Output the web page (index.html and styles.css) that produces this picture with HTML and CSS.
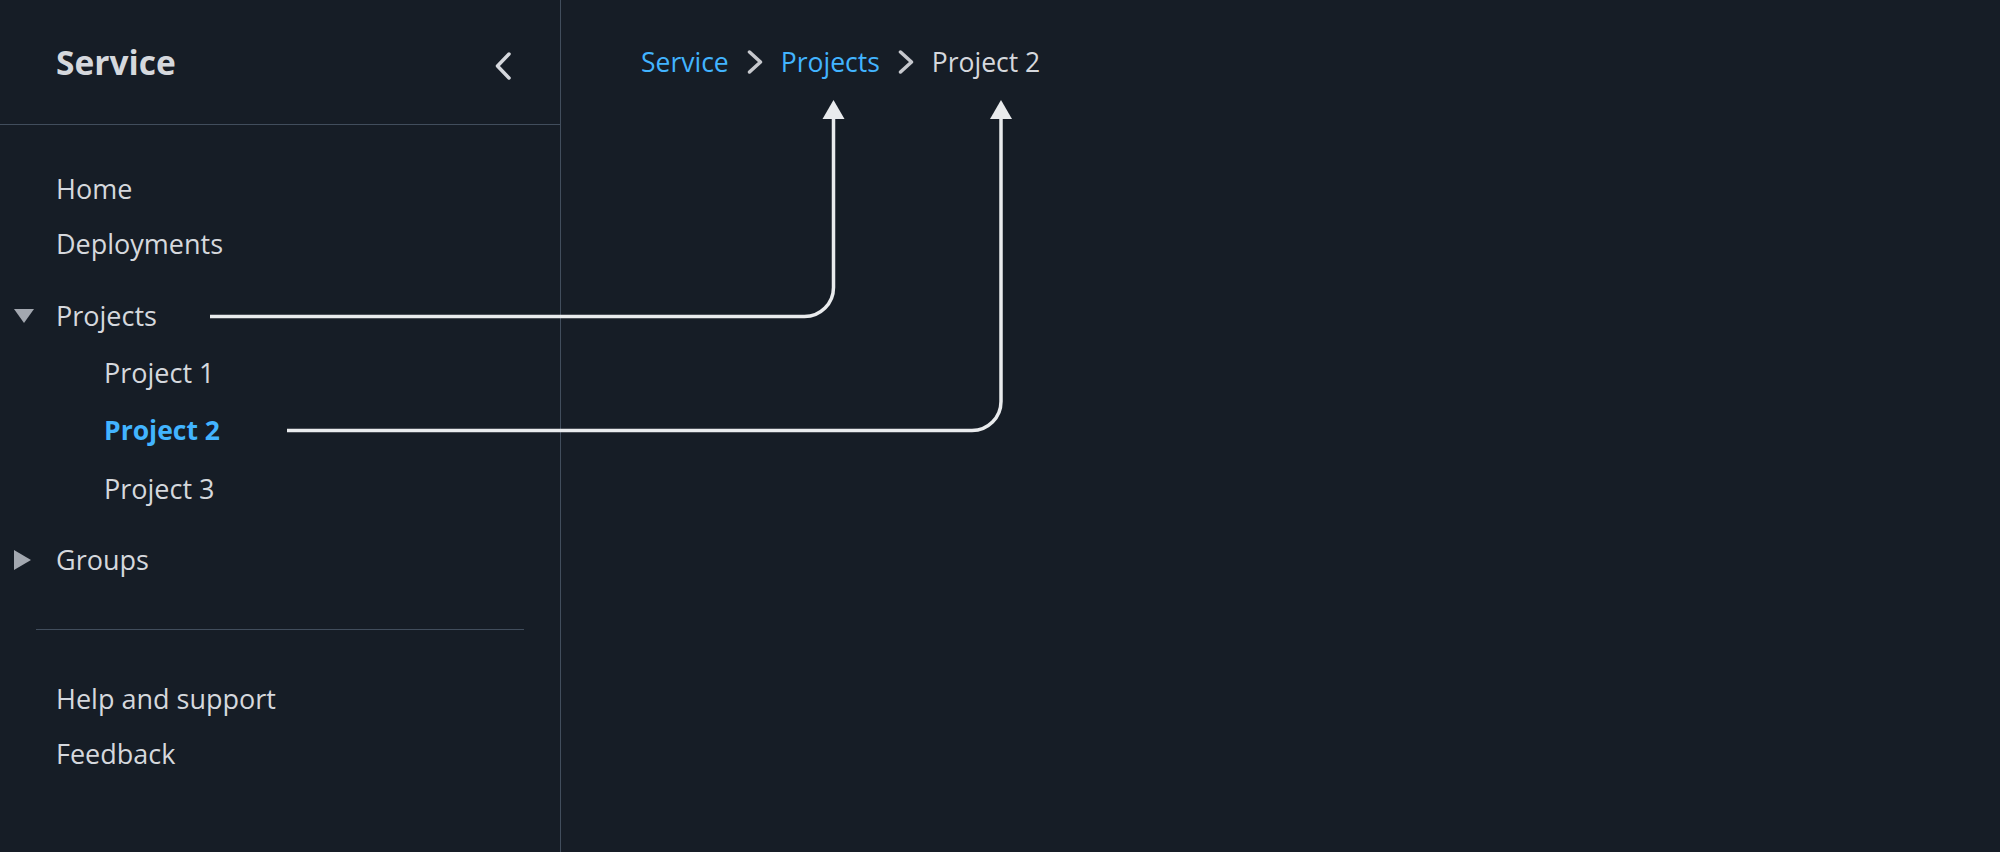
FILE: index.html
```html
<!DOCTYPE html>
<html lang="en">
<head>
    <meta charset="UTF-8">
    <meta name="viewport" content="width=device-width, initial-scale=1.0">
    <title>Service - Project 2</title>
    <link rel="stylesheet" href="styles.css">
</head>
<body>
    <div class="layout">
        <aside class="sidebar">
            <header class="sidebar-header">
                <span class="sidebar-title">Service</span>
                <button class="collapse-btn" aria-label="Close navigation">
                    <svg width="16" height="28" viewBox="0 0 16 28"><path d="M14 2 L2.5 14 L14 26" /></svg>
                </button>
            </header>
            <nav class="side-nav">
                <ul class="nav-list first">
                    <li class="nav-item"><a href="#">Home</a></li>
                    <li class="nav-item"><a href="#">Deployments</a></li>
                    <li class="nav-group projects">
                        <div class="nav-item expandable">
                            <span class="caret">
                                <svg width="20" height="14" viewBox="0 0 20 14"><polygon points="0,0 20,0 10,14" /></svg>
                            </span>
                            <a href="#">Projects</a>
                        </div>
                        <ul class="sub-list">
                            <li class="sub-item"><a href="#">Project 1</a></li>
                            <li class="sub-item active"><a href="#">Project 2</a></li>
                            <li class="sub-item"><a href="#">Project 3</a></li>
                        </ul>
                    </li>
                    <li class="nav-group groups">
                        <div class="nav-item expandable">
                            <span class="caret">
                                <svg width="17" height="20" viewBox="0 0 17 20"><polygon points="0,0 17,10 0,20" /></svg>
                            </span>
                            <a href="#">Groups</a>
                        </div>
                    </li>
                </ul>
                <hr class="nav-divider">
                <ul class="nav-list">
                    <li class="nav-item"><a href="#">Help and support</a></li>
                    <li class="nav-item"><a href="#">Feedback</a></li>
                </ul>
            </nav>
        </aside>
        <main class="content">
            <nav class="breadcrumbs">
                <a href="#" class="crumb">Service</a>
                <svg class="crumb-sep" width="16" height="24" viewBox="0 0 16 24"><path d="M2.5 2 L13.5 12 L2.5 22" /></svg>
                <a href="#" class="crumb">Projects</a>
                <svg class="crumb-sep" width="16" height="24" viewBox="0 0 16 24"><path d="M2.5 2 L13.5 12 L2.5 22" /></svg>
                <span class="crumb current">Project 2</span>
            </nav>
        </main>
    </div>

    <!-- callout arrows from nav entries up to their breadcrumb -->
    <svg class="callouts" width="2000" height="852" viewBox="0 0 2000 852">
        <path d="M210 316.5 H804.5 A29 29 0 0 0 833.5 287.5 V116" />
        <polygon points="833.5,100 822.5,119 844.5,119" />
        <path d="M287 430.5 H972 A29 29 0 0 0 1001 401.5 V116" />
        <polygon points="1001,100 990,119 1012,119" />
    </svg>
</body>
</html>
```

FILE: styles.css
```css
body {
    font-family: 'Open Sans', 'Noto Sans', sans-serif;
    margin: 0;
    padding: 0;
    background-color: #161d26;
    color: #d5d8dd;
    position: relative;
}

a {
    color: inherit;
    text-decoration: none;
}

.layout {
    display: flex;
    height: 100vh;
}

/* sidebar */
.sidebar {
    width: 561px;
    flex-shrink: 0;
    box-sizing: border-box;
    border-right: 1px solid #414d5c;
}

.sidebar-header {
    height: 125px;
    box-sizing: border-box;
    border-bottom: 1px solid #414d5c;
    display: flex;
    align-items: center;
    justify-content: space-between;
    padding: 0 49px 0 56px;
}

.sidebar-title {
    font-size: 33.5px;
    font-weight: 700;
    color: #d5d8dd;
}

.collapse-btn {
    background: none;
    border: none;
    padding: 0;
    margin-top: 7px;
    display: flex;
    cursor: pointer;
}

.collapse-btn path {
    fill: none;
    stroke: #d5d8dd;
    stroke-width: 3.5;
    stroke-linecap: round;
    stroke-linejoin: round;
}

.side-nav {
    padding-top: 36px;
}

.nav-list,
.sub-list {
    list-style: none;
    margin: 0;
    padding: 0;
}

.nav-item {
    height: 55px;
    display: flex;
    align-items: center;
    padding-left: 56px;
    font-size: 27px;
}

.nav-item.expandable {
    padding-left: 0;
}

.caret {
    width: 56px;
    box-sizing: border-box;
    padding-left: 14px;
    display: flex;
    align-items: center;
}

.caret polygon {
    fill: #a3a8b0;
}

.projects {
    margin-top: 17px;
}

.groups {
    margin-top: 15px;
}

.sub-item {
    height: 58px;
    display: flex;
    align-items: center;
    padding-left: 104px;
    font-size: 27px;
}

.sub-item.active {
    color: #42b4ff;
    font-weight: 700;
    font-size: 26.5px;
}

.nav-divider {
    border: none;
    border-top: 1px solid #414d5c;
    margin: 41.5px 36px 41.5px 36px;
}

/* main area */
.content {
    flex: 1;
    padding: 44px 0 0 80px;
}

.breadcrumbs {
    display: flex;
    align-items: center;
    gap: 18px;
    font-size: 26.5px;
    line-height: 36px;
}

.crumb {
    color: #42b4ff;
}

.crumb.current {
    color: #d5d8dd;
}

.crumb-sep path {
    fill: none;
    stroke: #c6c8cd;
    stroke-width: 3.5;
    stroke-linecap: round;
    stroke-linejoin: round;
}

/* overlay arrows */
.callouts {
    position: absolute;
    top: 0;
    left: 0;
    pointer-events: none;
}

.callouts path {
    fill: none;
    stroke: #e9ebed;
    stroke-width: 3.5;
}

.callouts polygon {
    fill: #e9ebed;
}
```
